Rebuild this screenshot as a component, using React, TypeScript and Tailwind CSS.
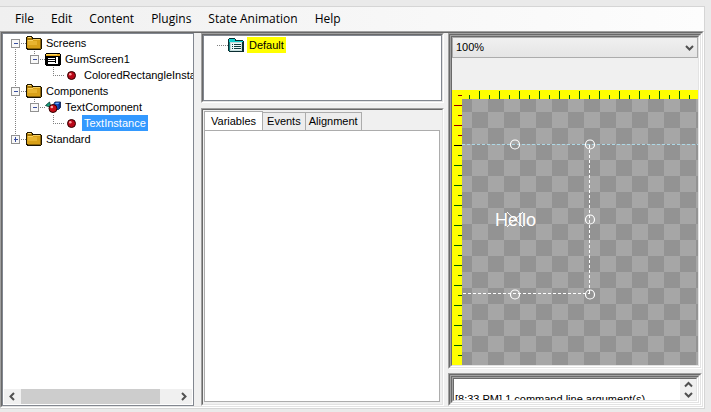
import type { ReactNode } from "react";

const uiFont = "font-['Liberation_Sans',Arial,sans-serif]";

function Sunken({ children, className = "" }: { children?: ReactNode; className?: string }) {
  return (
    <div className={`flex min-h-0 min-w-0 flex-col border border-t-[#a0a0a0] border-r-white border-b-white border-l-[#a0a0a0] ${className}`}>
      <div className="flex min-h-0 min-w-0 flex-1 flex-col border border-t-[#696969] border-r-[#e3e3e3] border-b-[#e3e3e3] border-l-[#696969]">
        {children}
      </div>
    </div>
  );
}

function FolderIcon() {
  return (
    <svg width="16" height="16" className="shrink-0" shapeRendering="crispEdges">
      <path d="M0 2h1V1h5v1h1v1h8v1h1v10h-1v1H1v-1H0z" fill="#1c1400" />
      <path d="M1 2h5v2h9v9H1z" fill="#a87808" />
      <path d="M2 2h3v1H2z" fill="#ffe080" />
      <path d="M1 5h6V4h7v9H1z" fill="#d8a018" />
      <path d="M2 5h5V4h7v1H7v1H2z" fill="#f8d060" />
      <path d="M2 6h9v4H2z" fill="#e8b430" />
      <path d="M14 4h1v10H2v-1h12z" fill="#8c6408" />
    </svg>
  );
}

function ScreenIcon() {
  return (
    <svg width="16" height="16" className="shrink-0" shapeRendering="crispEdges">
      <path d="M1 2h14v1h1v11h-1v1H1v-1H0V3h1z" fill="#000" />
      <path d="M1 3h14v2H1z" fill="#e8a818" />
      <path d="M1 3h11v1H1z" fill="#ffd860" />
      <path d="M3 7h7v1H3zM3 9h7v1H3zM3 11h7v1H3zM3 12h10v1H3zM11 6h2v6h-2z" fill="#fff" />
    </svg>
  );
}

function ComponentIcon() {
  return (
    <svg width="16" height="16" className="shrink-0">
      <path d="M0.5 6.5L4.5 3L6 8.5z" fill="#18a080" stroke="#02382c" strokeWidth="0.8" />
      <path d="M9 4.5L10 3H15.5V8.5L13.5 10.5H9z" fill="#1650c0" stroke="#001040" strokeWidth="0.8" />
      <path d="M10 5L11 3.8H14.5L13.5 5z" fill="#70b0ff" />
      <path d="M13.5 5L15 3.8V8.3L13.5 10z" fill="#082c80" />
      <circle cx="8" cy="9.5" r="4" fill="#c80c18" stroke="#300000" />
      <circle cx="6.8" cy="8" r="1.3" fill="#ffb0b0" />
    </svg>
  );
}

function InstanceIcon() {
  return (
    <svg width="16" height="16" className="shrink-0">
      <circle cx="7.5" cy="8.5" r="4" fill="#b80818" stroke="#300000" />
      <circle cx="6.3" cy="7.2" r="1.3" fill="#ff9c9c" />
    </svg>
  );
}

function StateIcon() {
  return (
    <svg width="16" height="16" className="shrink-0" shapeRendering="crispEdges">
      <path d="M0 2h1V1h6v1h1v1h7v1h1v11H1v-1H0z" fill="#0a2c30" />
      <path d="M1 2h6v2h8v1H1z" fill="#10d0d0" />
      <path d="M1 5h13v9H1z" fill="#188080" />
      <path d="M2 5h12v9H2z" fill="#c4dcdc" />
      <path d="M3 6h10v7H3z" fill="#eefafa" />
      <path d="M4 7h1v1H4zM6 7h7v1H6zM4 9h1v1H4zM6 9h7v1H6zM4 11h1v1H4zM6 11h7v1H6z" fill="#103c40" />
    </svg>
  );
}

type Row = {
  label: string;
  level: 0 | 1 | 2;
  icon: ReactNode;
  sign?: "+" | "-";
  root?: "first" | "last";
  selected?: boolean;
};

const rows: Row[] = [
  { label: "Screens", level: 0, icon: <FolderIcon />, sign: "-", root: "first" },
  { label: "GumScreen1", level: 1, icon: <ScreenIcon />, sign: "-" },
  { label: "ColoredRectangleInsta", level: 2, icon: <InstanceIcon /> },
  { label: "Components", level: 0, icon: <FolderIcon />, sign: "-" },
  { label: "TextComponent", level: 1, icon: <ComponentIcon />, sign: "-" },
  { label: "TextInstance", level: 2, icon: <InstanceIcon />, selected: true },
  { label: "Standard", level: 0, icon: <FolderIcon />, sign: "+", root: "last" },
];

function Guides({ row }: { row: Row }) {
  const width = 23 + row.level * 19;
  const x = 12 + row.level * 19;
  const dots = { stroke: "#808080", strokeDasharray: "1 1" };
  return (
    <svg width={width} height="16" className="shrink-0" shapeRendering="crispEdges">
      <line x1="12.5" x2="12.5" y1={row.root === "first" ? 8 : 0} y2={row.root === "last" ? 8 : 16} {...dots} />
      {row.level > 0 && <line x1={x + 0.5} x2={x + 0.5} y1="0" y2="8" {...dots} />}
      <line x1={x} x2={width} y1="8.5" y2="8.5" {...dots} />
      {row.sign && (
        <>
          <rect x={x - 3.5} y="4.5" width="8" height="8" fill="#f8f8f8" stroke="#919191" />
          <path d={`M${x - 1} 8.5h4`} stroke="#3a50a0" />
          {row.sign === "+" && <path d={`M${x + 0.5} 6v5`} stroke="#3a50a0" />}
        </>
      )}
    </svg>
  );
}

function Chevron({ d }: { d: string }) {
  return (
    <svg width="9" height="9" viewBox="0 0 9 9" fill="none" stroke="#505050" strokeWidth="2">
      <path d={d} />
    </svg>
  );
}

function ProjectTree() {
  return (
    <div className="flex min-h-0 min-w-0 flex-col border border-[#828790] bg-white">
      <ul role="tree" aria-label="Project" className="min-h-0 flex-1 overflow-hidden pt-px">
        {rows.map((row) => (
          <li key={row.label} role="treeitem" aria-level={row.level + 1} aria-selected={!!row.selected} className="flex h-4 items-center">
            <Guides row={row} />
            {row.icon}
            <span className={`ml-0.5 px-0.5 text-[11px] leading-4 whitespace-nowrap ${row.selected ? "bg-[#3399ff] text-white" : "text-black"}`}>
              {row.label}
            </span>
          </li>
        ))}
      </ul>
      <div className="m-px flex h-[15px] shrink-0 bg-[#f0f0f0]">
        <button type="button" aria-label="Scroll left" className="flex w-[17px] items-center justify-center">
          <Chevron d="M6 1L2.5 4.5L6 8" />
        </button>
        <div className="flex flex-1">
          <div className="w-[90%] bg-[#cdcdcd]" />
        </div>
        <button type="button" aria-label="Scroll right" className="flex w-[17px] items-center justify-center">
          <Chevron d="M3 1L6.5 4.5L3 8" />
        </button>
      </div>
    </div>
  );
}

function StatePanel() {
  return (
    <Sunken className="h-[70px] shrink-0">
      <ul role="tree" aria-label="States" className="flex-1 border border-[#828790] bg-white pt-px pl-3">
        <li role="treeitem" aria-selected className="flex h-4 items-center">
          <svg width="12" height="16" shapeRendering="crispEdges">
            <line x1="1" x2="12" y1="8.5" y2="8.5" stroke="#808080" strokeDasharray="1 1" />
          </svg>
          <StateIcon />
          <span className="ml-[3px] bg-[#ffff00] px-0.5 text-[11px] leading-4">Default</span>
        </li>
      </ul>
    </Sunken>
  );
}

function TabPanel() {
  return (
    <Sunken className="flex-1">
      <div className="flex flex-1 flex-col pr-0.5 pb-0.5 pl-px">
        <div role="tablist" className="flex h-5 shrink-0 items-end text-[11px]">
          <button type="button" role="tab" aria-selected className="-mb-px h-5 border border-b-0 border-[#acacac] bg-white px-1.5 pb-px">
            Variables
          </button>
          <button type="button" role="tab" aria-selected={false} className="h-[18px] border border-b-0 border-l-0 border-[#acacac] bg-[#ededed] px-1">
            Events
          </button>
          <button type="button" role="tab" aria-selected={false} className="h-[18px] border border-b-0 border-l-0 border-[#acacac] bg-[#ededed] px-[3px]">
            Alignment
          </button>
        </div>
        <div role="tabpanel" className="flex-1 border border-[#acacac] bg-white" />
      </div>
    </Sunken>
  );
}

const handles = [
  [63, 54.5],
  [138, 54.5],
  [138, 129.5],
  [63, 204.5],
  [138, 204.5],
];

function Canvas() {
  return (
    <svg className="block min-h-0 w-full flex-1">
      <defs>
        <pattern id="checker" x="20" y="22" width="32" height="32" patternUnits="userSpaceOnUse">
          <rect width="32" height="32" fill="#a6a6a6" />
          <path d="M0 0h16v16H0zM16 16h16v16H16z" fill="#939393" />
        </pattern>
        <pattern id="top-ticks" x="17" y="0" width="20" height="9" patternUnits="userSpaceOnUse">
          <path d="M0 5h1v4H0zM10 1h1v8h-1z" fill="#006400" />
        </pattern>
        <pattern id="left-ticks" x="0" y="5" width="10" height="20" patternUnits="userSpaceOnUse">
          <path d="M6 0h4v1H6zM2 10h8v1H2z" fill="#006400" />
        </pattern>
        <pattern id="left-ticks-negative" x="0" y="5" width="10" height="20" patternUnits="userSpaceOnUse">
          <path d="M6 0h4v1H6zM2 10h8v1H2z" fill="#8b0000" />
        </pattern>
      </defs>
      <g shapeRendering="crispEdges">
        <rect width="100%" height="100%" fill="url(#checker)" />
        <rect width="100%" height="9" fill="#ffff00" />
        <rect width="10" height="100%" fill="#ffff00" />
        <rect x="11" width="100%" height="9" fill="url(#top-ticks)" />
        <rect y="56" width="10" height="100%" fill="url(#left-ticks)" />
        <rect width="10" height="55" fill="url(#left-ticks-negative)" />
        <path d="M2 55h8v1H2z" fill="#000" />
        <line x1="10" x2="100%" y1="54.5" y2="54.5" stroke="#add8e6" strokeDasharray="3 2" />
        <path d="M137.5 55V203" stroke="#fff" strokeDasharray="3 2" />
        <path d="M11 203.5H138" stroke="#fff" strokeDasharray="3 2" />
      </g>
      <path d="M55 122L71 137M71 122L55 137" stroke="#fff" strokeWidth="1" />
      <text x="43" y="136" fontSize="18" fill="#fff">
        Hello
      </text>
      {handles.map(([x, y]) => (
        <circle key={`${x}-${y}`} cx={x} cy={y} r="4.5" fill="none" stroke="#fff" strokeWidth="1.2" />
      ))}
    </svg>
  );
}

function EditorPanel() {
  return (
    <Sunken className="flex-1">
      <Sunken className="flex-1">
        <div className="relative h-[21px] shrink-0">
          <select aria-label="Zoom" defaultValue="100%" className="block h-full w-full appearance-none border border-[#acacac] bg-linear-to-b from-[#f0f0f0] to-[#e5e5e5] px-[3px] pb-px text-[11px] leading-4">
            <option>50%</option>
            <option>100%</option>
            <option>200%</option>
          </select>
          <span className="pointer-events-none absolute inset-y-0 right-1 flex items-center">
            <Chevron d="M1 3L4.5 6.5L8 3" />
          </span>
        </div>
        <div className="h-8 shrink-0" />
        <Canvas />
      </Sunken>
    </Sunken>
  );
}

function OutputPanel() {
  return (
    <Sunken className="h-[33px] shrink-0">
      <Sunken className="flex-1">
        <Sunken className="flex-1">
          <div className="flex min-h-0 flex-1 bg-white">
            <textarea
              readOnly
              aria-label="Output"
              value={"\n[8:33 PM] 1 command line argument(s)"}
              className="min-w-0 flex-1 resize-none overflow-hidden pt-px pl-px text-[11px] leading-[13px]"
            />
            <div className="flex w-4 flex-col items-center justify-around bg-[#f0f0f0]">
              <button type="button" aria-label="Scroll up">
                <Chevron d="M1 6.5L4.5 3L8 6.5" />
              </button>
              <button type="button" aria-label="Scroll down">
                <Chevron d="M1 3L4.5 6.5L8 3" />
              </button>
            </div>
          </div>
        </Sunken>
      </Sunken>
    </Sunken>
  );
}

const menus = ["File", "Edit", "Content", "Plugins", "State Animation", "Help"];

export default function App() {
  return (
    <div className={`h-screen bg-[#eaeaea] pt-1.5 pr-1.5 pb-[3px] text-black ${uiFont}`}>
      <div className="flex h-full flex-col border border-l-0 border-[#d5d5d5] bg-[#f0f0f0]">
        <nav className="flex h-6 shrink-0 items-center gap-[17px] bg-linear-to-r from-[#f0f0f0] to-[#fdfdfd] pl-[15px] font-['Open_Sans','Noto_Sans',sans-serif] text-[12px]">
          {menus.map((name) => (
            <button key={name} type="button">
              {name}
            </button>
          ))}
        </nav>
        <Sunken className="flex-1">
          <main className="grid min-h-0 flex-1 grid-cols-[192fr_7px_243fr_4px_254fr] grid-rows-[minmax(0,1fr)]">
            <ProjectTree />
            <div role="separator" />
            <div className="flex min-h-0 min-w-0 flex-col gap-[5px]">
              <StatePanel />
              <TabPanel />
            </div>
            <div role="separator" />
            <div className="flex min-h-0 min-w-0 flex-col gap-1">
              <EditorPanel />
              <OutputPanel />
            </div>
          </main>
        </Sunken>
      </div>
    </div>
  );
}
